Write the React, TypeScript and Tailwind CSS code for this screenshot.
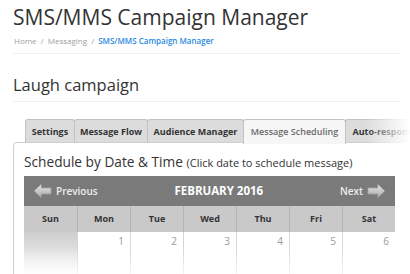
import React from "react";

const tabs = [
  { label: "Settings", width: "w-[50px]" },
  { label: "Message Flow", width: "w-[74px]" },
  { label: "Audience Manager", width: "w-[97px]" },
  { label: "Message Scheduling", width: "w-[103px]", active: true },
  { label: "Auto-responders", width: "w-[90px]" },
];

const days = ["Sun", "Mon", "Tue", "Wed", "Thu", "Fri", "Sat"];
const dates = ["", "1", "2", "3", "4", "5", "6"];

function Arrow({ right = false }: { right?: boolean }) {
  const id = right ? "arrR" : "arrL";
  return (
    <svg width="19" height="16" viewBox="0 0 19 16" className={right ? "-scale-x-100" : ""}>
      <defs>
        <linearGradient id={id} x1="0" y1="0" x2="0" y2="1">
          <stop offset="0" stopColor="#e8e8e8" />
          <stop offset="1" stopColor="#a6a6a6" />
        </linearGradient>
      </defs>
      <polygon
        points="0.8,8 8.5,0.8 8.5,4.8 18.2,4.8 18.2,11.2 8.5,11.2 8.5,15.2"
        fill={`url(#${id})`}
        stroke="#8b8b8b"
        strokeWidth="0.8"
        strokeLinejoin="round"
      />
    </svg>
  );
}

export default function App() {
  return (
    <div
      className="relative h-[274px] w-[410px] overflow-hidden bg-white pl-[13px]"
      style={{ fontFamily: '"Open Sans", sans-serif' }}
    >
      <h1 className="pt-[7px] text-[21px] leading-[21px] text-[#333]">SMS/MMS Campaign Manager</h1>
      <div className="mt-[7px] pl-px text-[8px] leading-[12px] text-[#a0a0a0]">
        Home <span className="mx-[2px]">/</span> Messaging <span className="mx-[2px]">/</span>{" "}
        <span className="font-semibold text-[#2a8ae0]">SMS/MMS Campaign Manager</span>
      </div>
      <div className="mt-[6px] mr-[10px] border-t border-[#f0f0f0]" />

      <h2 className="mt-[21px] text-[16.5px] leading-[20px] text-[#333]">Laugh campaign</h2>
      <div className="mt-[6px] mr-[10px] border-t border-[#eeeeee]" />

      <div className="mt-[17px] flex pl-[12px]">
        {tabs.map((t) => (
          <div
            key={t.label}
            className={`-mr-px flex h-[24px] shrink-0 items-center justify-center whitespace-nowrap rounded-t-[3px] border border-b-0 border-[#c2c2c2] text-[9px] ${t.width} ${
              t.active
                ? "relative z-10 -mb-px h-[25px] bg-[#f6f6f6] font-semibold text-[#6a6a6a]"
                : "bg-[#dcdcdc] font-bold text-[#333]"
            }`}
          >
            {t.label}
          </div>
        ))}
      </div>

      <div className="relative -mt-px w-[420px] rounded-tl-[4px] border border-[#cfcfcf] pl-[10px] pt-[9px]">
        <div className="whitespace-nowrap text-[13.7px] leading-[20px] text-[#333]">
          Schedule by Date &amp; Time <span className="text-[11px] leading-none">(Click date to schedule message)</span>
        </div>

        <div className="mt-[4px] w-[371px]">
          <div className="flex h-[30px] items-center justify-between bg-[#7a7a7a] px-[9px] text-white">
            <div className="flex items-center gap-[4px] text-[10px] font-semibold text-[#ededed]">
              <Arrow />
              Previous
            </div>
            <div className="text-[11.5px] font-bold">FEBRUARY 2016</div>
            <div className="flex items-center gap-[4px] text-[10px] font-semibold text-[#ededed]">
              Next
              <Arrow right />
            </div>
          </div>
          <div className="grid h-[26px] grid-cols-7 bg-[#c9c9c9]">
            {days.map((d, i) => (
              <div
                key={d}
                className={`flex items-center justify-center text-[9px] font-bold text-[#333] ${
                  i > 0 ? "border-l border-[#b5b5b5]" : ""
                }`}
              >
                {d}
              </div>
            ))}
          </div>
          <div className="relative grid h-[50px] grid-cols-7">
            {dates.map((n, i) => (
              <div
                key={i}
                className={`pr-[6px] pt-[2px] text-right text-[10px] text-[#9a9a9a] ${
                  i > 0 ? "border-l border-[#d6d6d6]" : ""
                } ${n === "" ? "bg-gradient-to-b from-[#cdcdcd] to-white" : "bg-white"}`}
              >
                {n}
              </div>
            ))}
            <div className="pointer-events-none absolute inset-x-0 bottom-0 h-[34px] bg-gradient-to-b from-white/0 to-white" />
          </div>
        </div>
      </div>

      <div className="pointer-events-none absolute right-0 top-[115px] h-[32px] w-[45px] bg-gradient-to-r from-white/0 to-white" />
    </div>
  );
}
